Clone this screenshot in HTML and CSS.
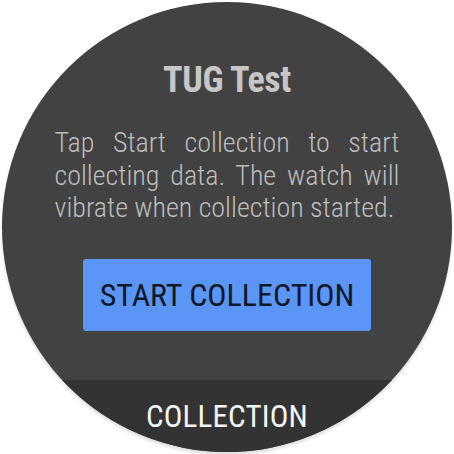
FILE: index.html
```html
<!DOCTYPE html>
<html>
<head>
<meta charset="utf-8">
<link rel="stylesheet" href="styles.css">
</head>
<body>
<div class="watch">
  <div class="content">
    <h1 class="title">TUG Test</h1>
    <p class="desc">Tap Start collection to start collecting data. The watch will vibrate when collection started.</p>
    <button class="start">START COLLECTION</button>
  </div>
  <div class="strip">COLLECTION</div>
</div>
</body>
</html>
```
FILE: styles.css
```css
html, body {
  margin: 0;
  padding: 0;
  background: #ffffff;
  width: 454px;
  height: 454px;
  overflow: hidden;
}
.watch {
  margin: 2px 0 0 2px;
  width: 450px;
  height: 450px;
  border-radius: 50%;
  overflow: hidden;
  background: #424242;
  display: flex;
  flex-direction: column;
  align-items: center;
  font-family: Roboto, "Liberation Sans", sans-serif;
  font-stretch: 75%;
  box-shadow: 0 3px 3px rgba(0,0,0,0.12);
}
.content {
  flex: 1;
  display: flex;
  flex-direction: column;
  align-items: center;
}
.title {
  margin: 58px 0 0 0;
  font-size: 36px;
  line-height: 40px;
  font-weight: 700;
  letter-spacing: -0.4px;
  color: #c6c6c6;
}
.desc {
  margin: 27px 0 0 0;
  width: 345px;
  font-size: 28px;
  line-height: 32.5px;
  font-weight: 300;
  color: #bdbdbd;
  text-align: justify;
  text-align-last: left;
}
.start {
  margin-top: 34px;
  width: 288px;
  height: 72px;
  border: none;
  border-radius: 3px;
  background: #5b95f5;
  color: #111827;
  font-family: inherit;
  font-stretch: 75%;
  font-size: 32px;
  font-weight: 400;
  padding: 0;
}
.strip {
  height: 72px;
  width: 100%;
  background: #333333;
  color: #f5f5f5;
  text-align: center;
  font-size: 31px;
  line-height: 30px;
  letter-spacing: 0.2px;
  padding-top: 22px;
  box-sizing: border-box;
}
```
